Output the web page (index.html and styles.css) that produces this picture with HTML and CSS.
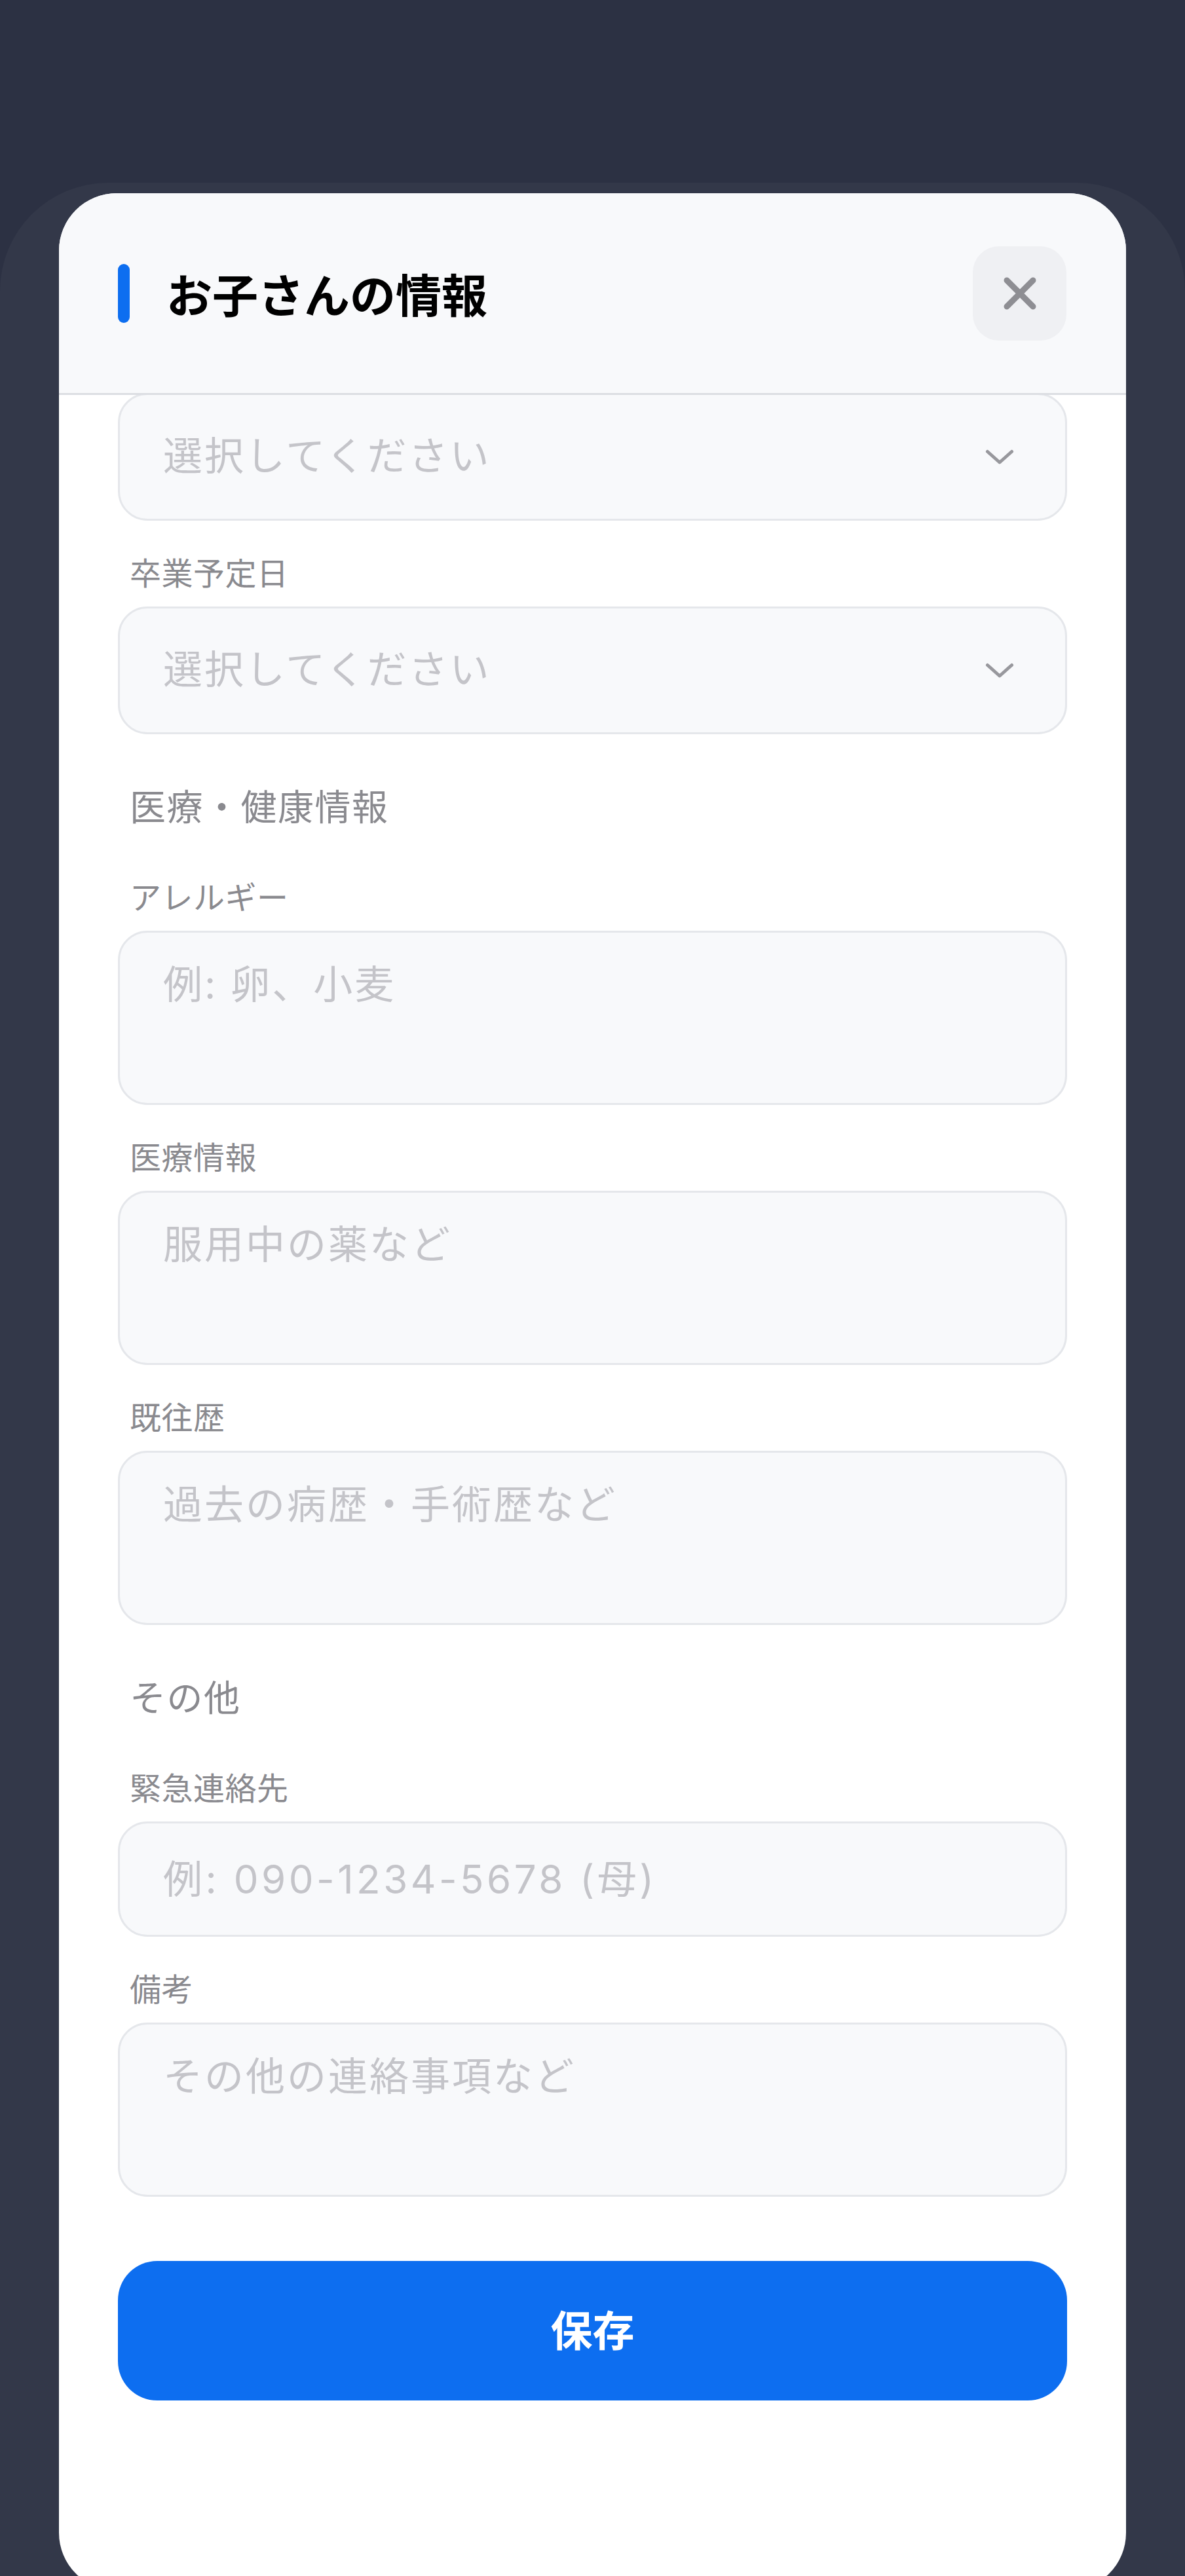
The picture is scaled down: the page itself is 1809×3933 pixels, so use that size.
FILE: index.html
```html
<!DOCTYPE html>
<html lang="ja">
<head>
<meta charset="utf-8">
<title>お子さんの情報</title>
<link rel="stylesheet" href="styles.css">
</head>
<body>
<div class="screen">
  <div class="backdrop">
    <section class="sheet">
      <header class="sheet-header">
        <div class="title-wrap">
          <span class="title-bar"></span>
          <h1 class="title">お子さんの情報</h1>
        </div>
        <button class="close-btn" type="button" aria-label="閉じる">
          <svg class="close-icon" width="60" height="60" viewBox="0 0 60 60"><path d="M10 10L50 50M50 10L10 50" stroke="#8e8e93" stroke-width="9" stroke-linecap="round" fill="none"/></svg>
        </button>
      </header>
      <div class="sheet-body">
        <form class="form">
          <div class="select select-first">
            <span class="select-text">選択してください</span>
            <svg class="chevron" width="44" height="24" viewBox="0 0 44 24"><path d="M3.5 3.5L22 20L40.5 3.5" stroke="#98989d" stroke-width="5" stroke-linecap="round" stroke-linejoin="round" fill="none"/></svg>
          </div>

          <div class="field">
            <label class="label">卒業予定日</label>
            <div class="select">
              <span class="select-text">選択してください</span>
              <svg class="chevron" width="44" height="24" viewBox="0 0 44 24"><path d="M3.5 3.5L22 20L40.5 3.5" stroke="#98989d" stroke-width="5" stroke-linecap="round" stroke-linejoin="round" fill="none"/></svg>
            </div>
          </div>

          <h2 class="section-title">医療・健康情報</h2>

          <div class="field">
            <label class="label" for="allergy">アレルギー</label>
            <textarea id="allergy" class="textarea" placeholder="例: 卵、小麦"></textarea>
          </div>

          <div class="field">
            <label class="label" for="medical">医療情報</label>
            <textarea id="medical" class="textarea" placeholder="服用中の薬など"></textarea>
          </div>

          <div class="field">
            <label class="label" for="history">既往歴</label>
            <textarea id="history" class="textarea" placeholder="過去の病歴・手術歴など"></textarea>
          </div>

          <h2 class="section-title">その他</h2>

          <div class="field">
            <label class="label" for="emergency">緊急連絡先</label>
            <input id="emergency" class="input" type="text" placeholder="例: 090-1234-5678 (母)">
          </div>

          <div class="field">
            <label class="label" for="notes">備考</label>
            <textarea id="notes" class="textarea" placeholder="その他の連絡事項など"></textarea>
          </div>

          <button class="save-btn" type="button">保存</button>
        </form>
      </div>
    </section>
  </div>
</div>
</body>
</html>
```
FILE: styles.css
```css
* {
  box-sizing: border-box;
}

html,
body {
  margin: 0;
  padding: 0;
  height: 3933px;
  overflow: hidden;
}

body {
  background: #2c3143;
  font-family: "Inter", "Noto Sans CJK JP", sans-serif;
}

.screen {
  height: 3933px;
  padding-top: 279px;
  overflow: hidden;
}

.backdrop {
  height: 100%;
  background: #333849;
  border-radius: 165px 165px 0 0;
  padding: 16px 90px 0;
}

.sheet {
  background: #ffffff;
  border-radius: 88px;
  height: 3660px;
  overflow: hidden;
  display: flex;
  flex-direction: column;
}

.sheet-header {
  flex: none;
  height: 308px;
  background: #f8f9fb;
  border-bottom: 3px solid #dcdee3;
  display: flex;
  align-items: center;
  justify-content: space-between;
  padding: 0 91px 0 90px;
}

.title-wrap {
  display: flex;
  align-items: center;
}

.title-bar {
  width: 18px;
  height: 90px;
  border-radius: 9px;
  background: #0d6ef0;
  margin-right: 56px;
}

.title {
  margin: 0;
  font-size: 70px;
  line-height: 1;
  font-weight: 700;
  color: #000000;
  font-family: "Noto Sans CJK JP", sans-serif;
}

.close-btn {
  width: 143px;
  height: 144px;
  border: none;
  border-radius: 40px;
  background: #eff0f3;
  padding: 0;
  display: flex;
  align-items: center;
  justify-content: center;
}

.close-icon {
  display: block;
}

.sheet-body {
  flex: 1;
  overflow: hidden;
}

.form {
  display: flex;
  flex-direction: column;
  padding: 0 90px;
  margin: 0;
}

.select,
.textarea,
.input {
  width: 100%;
  border: 3px solid #e5e7eb;
  border-radius: 45px;
  background: #f8f9fb;
  font-family: "Inter", "Noto Sans CJK JP", sans-serif;
  font-size: 60px;
  letter-spacing: 3px;
  color: #c4c4c9;
}

.select {
  height: 195px;
  display: flex;
  align-items: center;
  justify-content: space-between;
  padding: 0 78px 0 66px;
}

.select-first {
  margin-top: -3px;
}

.select-text {
  line-height: 1;
  padding-bottom: 3px;
}

.chevron {
  display: block;
  flex: none;
}

.field {
  display: flex;
  flex-direction: column;
  margin-top: 47px;
}

.label {
  font-size: 48px;
  line-height: 68px;
  color: #8a8a8f;
  margin: 0 0 16px;
  padding-left: 18px;
  letter-spacing: 0.5px;
}

.section-title {
  margin: 73px 0 0;
  padding-left: 18px;
  font-size: 55px;
  line-height: 76px;
  font-weight: 400;
  color: #8a8a8f;
  letter-spacing: 1.5px;
}

.section-title + .field {
  margin-top: 67px;
}

.textarea {
  display: block;
  height: 266px;
  resize: none;
  padding: 37px 66px;
  line-height: 84px;
  outline: none;
}

.input {
  display: block;
  height: 176px;
  padding: 0 66px;
  outline: none;
  letter-spacing: 4.5px;
}

.textarea::placeholder,
.input::placeholder {
  color: #c4c4c9;
  opacity: 1;
}

.save-btn {
  margin-top: 98px;
  width: 100%;
  height: 213px;
  border: none;
  border-radius: 60px;
  background: #0d6ef0;
  color: #ffffff;
  font-family: "Noto Sans CJK JP", sans-serif;
  font-size: 64px;
  line-height: 1;
  font-weight: 700;
  padding: 0 0 10px;
}
```
